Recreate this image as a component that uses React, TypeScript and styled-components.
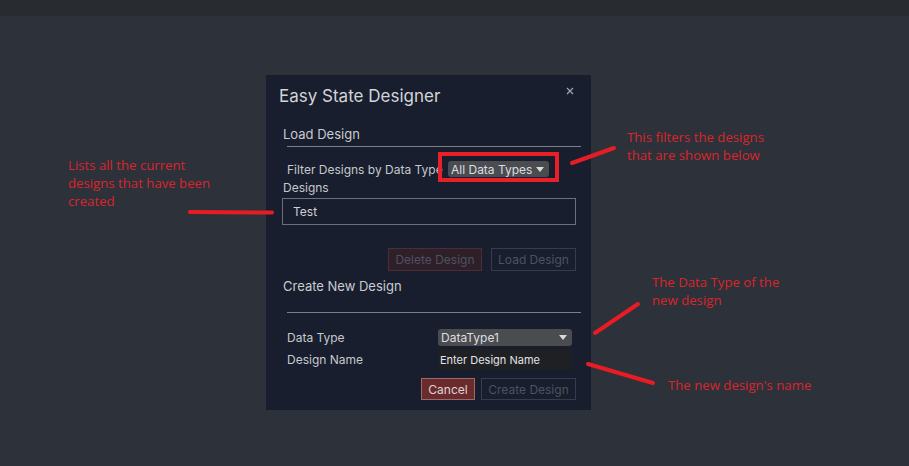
import React from "react";
import styled, { createGlobalStyle } from "styled-components";

const GlobalStyle = createGlobalStyle`
  html, body { margin: 0; padding: 0; background: #2d313a; }
  body { font-family: Inter, "Liberation Sans", sans-serif; }
  * { box-sizing: border-box; }
`;

const Page = styled.div`
  position: relative;
  width: 909px;
  height: 466px;
  overflow: hidden;
  background: #2d313a;
`;

const TopBar = styled.div`
  height: 16px;
  background: #282b30;
`;

const Stage = styled.div`
  padding: 59px 0 0 266px;
`;

const Dialog = styled.div`
  width: 325px;
  height: 335px;
  background: #181e2d;
  display: flex;
  flex-direction: column;
  color: #c9cbd0;
`;

const Header = styled.div`
  display: flex;
  justify-content: space-between;
  align-items: flex-start;
  padding: 11px 17px 0 13px;
  height: 31px;
`;

const Title = styled.div`
  font-size: 17px;
  line-height: 20px;
  color: #d2d4d8;
`;

const Close = styled.svg`
  margin-top: 1px;
`;

const Body = styled.div`
  display: flex;
  flex-direction: column;
  padding: 0 15px 0 16px;
`;

const SectionTitle = styled.div<{ $top: number }>`
  font-size: 13px;
  line-height: 16px;
  margin: ${(p) => p.$top}px 0 0 1px;
  color: #c9cbd0;
`;

const Divider = styled.div<{ $top: number }>`
  height: 1px;
  background: #7b7f87;
  margin: ${(p) => p.$top}px -5px 0 5px;
`;

const Row = styled.div<{ $top: number; $indent: number }>`
  display: flex;
  align-items: center;
  margin: ${(p) => p.$top}px 0 0 ${(p) => p.$indent}px;
`;

const Label = styled.div<{ $w: number }>`
  font-size: 12px;
  line-height: 15px;
  width: ${(p) => p.$w}px;
  flex: none;
  white-space: nowrap;
  color: #c6c8cd;
`;

const Dropdown = styled.div<{ $w: number; $h: number }>`
  width: ${(p) => p.$w}px;
  height: ${(p) => p.$h}px;
  background: #4b4c50;
  border-radius: 3px;
  display: flex;
  align-items: center;
  justify-content: space-between;
  padding: 0 5px 0 3px;
  font-size: 12px;
  color: #dcdde0;
  position: relative;
  z-index: 1;
`;

const Arrow = styled.span`
  width: 0;
  height: 0;
  border-left: 4px solid transparent;
  border-right: 4px solid transparent;
  border-top: 5px solid #d8d9dc;
`;

const ListBox = styled.div`
  height: 27px;
  width: 294px;
  border: 1px solid #6c7079;
  margin-top: 3px;
  display: flex;
  align-items: center;
  padding-left: 10px;
  font-size: 12px;
  color: #cfd1d5;
`;

const ButtonRow = styled.div<{ $top: number; $gap: number }>`
  display: flex;
  justify-content: flex-end;
  gap: ${(p) => p.$gap}px;
  margin-top: ${(p) => p.$top}px;
`;

const Button = styled.div<{ $variant: "danger" | "dangerDim" | "dim"; $w: number; $h: number }>`
  width: ${(p) => p.$w}px;
  height: ${(p) => p.$h}px;
  display: flex;
  align-items: center;
  justify-content: center;
  font-size: 12px;
  border: 1px solid
    ${(p) => (p.$variant === "danger" ? "#9b6a6b" : p.$variant === "dangerDim" ? "#4a2e37" : "#363c4b")};
  background: ${(p) => (p.$variant === "danger" ? "#6b2a2c" : p.$variant === "dangerDim" ? "#2e1f29" : "transparent")};
  color: ${(p) => (p.$variant === "danger" ? "#dcd6d6" : "#4d5261")};
`;

const Input = styled.div`
  width: 134px;
  height: 21px;
  background: #1f2024;
  border-radius: 3px;
  display: flex;
  align-items: center;
  padding-left: 2px;
  font-size: 11px;
  color: #e2e3e6;
`;

const FilterHighlight = styled.div`
  position: absolute;
  left: 438px;
  top: 152px;
  width: 121px;
  height: 30px;
  border: 4px solid #e8202a;
  z-index: 2;
`;

const Note = styled.div<{ $x: number; $y: number }>`
  position: absolute;
  left: ${(p) => p.$x}px;
  top: ${(p) => p.$y}px;
  font-family: "Open Sans", "Noto Sans", sans-serif;
  font-size: 13.2px;
  line-height: 18px;
  color: #da252b;
  white-space: nowrap;
  z-index: 3;
`;

const Overlay = styled.svg`
  position: absolute;
  left: 0;
  top: 0;
  z-index: 3;
  pointer-events: none;
`;

export default function App() {
  return (
    <>
      <GlobalStyle />
      <Page>
        <TopBar />
        <Stage>
          <Dialog>
            <Header>
              <Title>Easy State Designer</Title>
              <Close width="8" height="8" viewBox="0 0 8 8">
                <path d="M1 1L7 7M7 1L1 7" stroke="#9ea1a7" strokeWidth="1.3" />
              </Close>
            </Header>
            <Body>
              <SectionTitle $top={20}>Load Design</SectionTitle>
              <Divider $top={4} />
              <Row $top={14} $indent={5}>
                <Label $w={161}>Filter Designs by Data Type</Label>
                <Dropdown $w={101} $h={16}>
                  <span>All Data Types</span>
                  <Arrow />
                </Dropdown>
              </Row>
              <SectionTitle $top={3} as="div">
                <Label $w={100}>Designs</Label>
              </SectionTitle>
              <ListBox>Test</ListBox>
              <ButtonRow $top={23} $gap={9}>
                <Button $variant="dangerDim" $w={94} $h={23}>
                  Delete Design
                </Button>
                <Button $variant="dim" $w={85} $h={23}>
                  Load Design
                </Button>
              </ButtonRow>
              <SectionTitle $top={7}>Create New Design</SectionTitle>
              <Divider $top={18} />
              <Row $top={16} $indent={5}>
                <Label $w={151}>Data Type</Label>
                <Dropdown $w={134} $h={17}>
                  <span>DataType1</span>
                  <Arrow />
                </Dropdown>
              </Row>
              <Row $top={3} $indent={5}>
                <Label $w={151}>Design Name</Label>
                <Input>Enter Design Name</Input>
              </Row>
              <ButtonRow $top={8} $gap={6}>
                <Button $variant="danger" $w={54} $h={22}>
                  Cancel
                </Button>
                <Button $variant="dim" $w={95} $h={22}>
                  Create Design
                </Button>
              </ButtonRow>
            </Body>
          </Dialog>
        </Stage>

        <FilterHighlight />
        <Overlay width="909" height="466" viewBox="0 0 909 466">
          <g stroke="#e81c24" strokeWidth="4" strokeLinecap="round">
            <line x1="190" y1="212" x2="272" y2="212.5" />
            <line x1="572" y1="163" x2="614" y2="148" />
            <line x1="595" y1="333" x2="638" y2="304" />
            <line x1="588" y1="364" x2="653" y2="383" />
          </g>
        </Overlay>
        <Note $x={68} $y={156}>
          Lists all the current
          <br />
          designs that have been
          <br />
          created
        </Note>
        <Note $x={627} $y={128}>
          This filters the designs
          <br />
          that are shown below
        </Note>
        <Note $x={652} $y={273}>
          The Data Type of the
          <br />
          new design
        </Note>
        <Note $x={668} $y={376}>
          The new design's name
        </Note>
      </Page>
    </>
  );
}
